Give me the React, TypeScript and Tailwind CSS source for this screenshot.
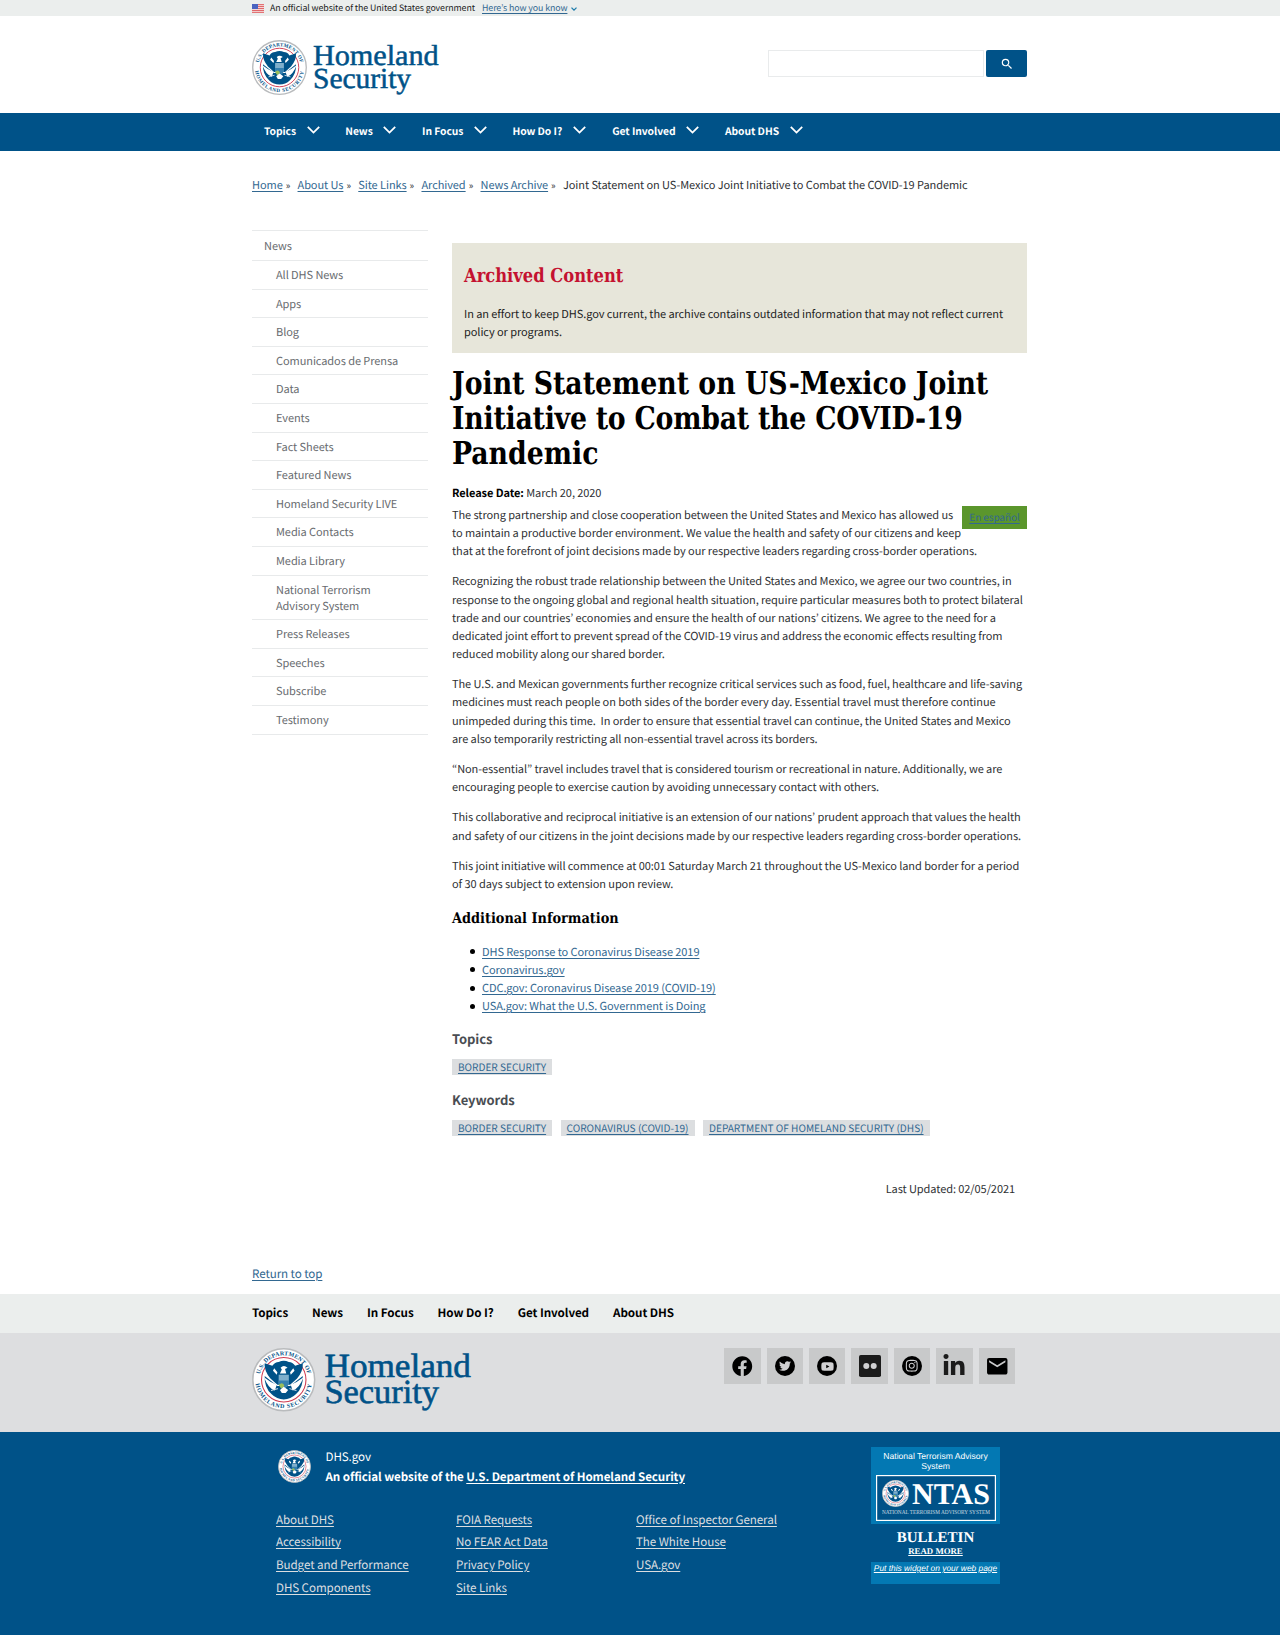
import React from "react";
import { FaFacebook, FaTwitter, FaYoutube, FaLinkedinIn, FaInstagram } from "react-icons/fa";
import { MdEmail, MdSearch } from "react-icons/md";

const serif = "font-['DejaVu_Serif_Condensed','DejaVu_Serif',serif] font-bold [font-stretch:condensed] origin-left";
const link = "text-[#326891] underline decoration-[1px] underline-offset-[1.5px]";

const navItems = [
  { label: "Topics", width: "w-[55.5px]" },
  { label: "News", width: "w-[51px]" },
  { label: "In Focus", width: "w-[64.5px]" },
  { label: "How Do I?", width: "w-[74px]" },
  { label: "Get Involved", width: "w-[87px]" },
  { label: "About DHS", width: "w-[78px]" },
];

const sideItems = [
  "All DHS News", "Apps", "Blog", "Comunicados de Prensa", "Data", "Events", "Fact Sheets",
  "Featured News", "Homeland Security LIVE", "Media Contacts", "Media Library",
  "National Terrorism Advisory System", "Press Releases", "Speeches", "Subscribe", "Testimony",
];

const paragraphs = [
  [
    "The strong partnership and close cooperation between the United States and Mexico has allowed us",
    "to maintain a productive border environment. We value the health and safety of our citizens and keep",
    "that at the forefront of joint decisions made by our respective leaders regarding cross-border operations.",
  ],
  [
    "Recognizing the robust trade relationship between the United States and Mexico, we agree our two countries, in",
    "response to the ongoing global and regional health situation, require particular measures both to protect bilateral",
    "trade and our countries’ economies and ensure the health of our nations’ citizens. We agree to the need for a",
    "dedicated joint effort to prevent spread of the COVID-19 virus and address the economic effects resulting from",
    "reduced mobility along our shared border.",
  ],
  [
    "The U.S. and Mexican governments further recognize critical services such as food, fuel, healthcare and life-saving",
    "medicines must reach people on both sides of the border every day. Essential travel must therefore continue",
    "unimpeded during this time.\u00a0 In order to ensure that essential travel can continue, the United States and Mexico",
    "are also temporarily restricting all non-essential travel across its borders.",
  ],
  [
    "“Non-essential” travel includes travel that is considered tourism or recreational in nature. Additionally, we are",
    "encouraging people to exercise caution by avoiding unnecessary contact with others.",
  ],
  [
    "This collaborative and reciprocal initiative is an extension of our nations’ prudent approach that values the health",
    "and safety of our citizens in the joint decisions made by our respective leaders regarding cross-border operations.",
  ],
  [
    "This joint initiative will commence at 00:01 Saturday March 21 throughout the US-Mexico land border for a period",
    "of 30 days subject to extension upon review.",
  ],
];

const resources = [
  "DHS Response to Coronavirus Disease 2019",
  "Coronavirus.gov",
  "CDC.gov: Coronavirus Disease 2019 (COVID-19)",
  "USA.gov: What the U.S. Government is Doing",
];

const footerColumns = [
  ["About DHS", "Accessibility", "Budget and Performance", "DHS Components"],
  ["FOIA Requests", "No FEAR Act Data", "Privacy Policy", "Site Links"],
  ["Office of Inspector General", "The White House", "USA.gov"],
];

function Seal({ id, className }: { id: string; className: string }) {
  return (
    <svg viewBox="0 0 100 100" className={className} role="img" aria-label="Seal">
      <defs>
        <path id={id + "-top"} d="M11.5 50 A38.5 38.5 0 1 1 88.5 50" />
        <path id={id + "-bottom"} d="M5.2 50 A44.8 44.8 0 0 0 94.8 50" />
      </defs>
      <circle cx="50" cy="50" r="48.7" fill="#fff" stroke="#b9bbbd" strokeWidth="2.4" />
      <circle cx="50" cy="50" r="35" fill="#fff" stroke="#cf3a50" strokeWidth="1.7" />
      <g fill="#005288" fontFamily="Liberation Serif" fontWeight="700" fontSize="9.4" textAnchor="middle">
        <text letterSpacing="0.2">
          <textPath href={"#" + id + "-top"} startOffset="50%">U.S. DEPARTMENT OF</textPath>
        </text>
        <text letterSpacing="1.2">
          <textPath href={"#" + id + "-bottom"} startOffset="50%">HOMELAND SECURITY</textPath>
        </text>
      </g>
      <path d="M20 44 Q19 62 31 73 Q39 81 50 81 Q61 81 69 73 Q81 62 80 44 L60 60 H40Z" fill="#005288" />
      <path d="M20 24 L32 28 Q36 22 42 22 Q50 18 58 22 Q64 22 68 28 L80 24 Q81 36 71 48 L60 58 H40 L29 48 Q19 36 20 24Z" fill="#005288" />
      <path d="M19 46 Q29 54 39 58 L36 67 Q25 63 19 46Z" fill="#fff" />
      <path d="M81 46 Q71 54 61 58 L64 67 Q75 63 81 46Z" fill="#fff" />
      <path d="M35 32 L40 38 L39 42 L33 36Z M65 32 L60 38 L61 42 L67 36Z" fill="#fff" />
      <path d="M45 31 Q50 26 56 31 L52 33 L54 40 L44 40 L47 34Z" fill="#fff" />
      <path d="M42 42 H58 V56 Q57 61 50 64 Q43 61 42 56Z" fill="#7fafcc" />
      <path d="M42 51 H58 V56 Q57 61 50 64 Q43 61 42 56Z" fill="#3580b0" />
      <path d="M42 58 Q49 52 51 60 L46 64Z" fill="#9bbf5a" />
      <path d="M44 66 L50 61 L57 66 L53 71 L47 71Z" fill="#fff" />
      <path d="M30 67 L41 64 M70 67 L59 64" stroke="#dfe9f0" strokeWidth="1.5" />
    </svg>
  );
}

function Wordmark({ className }: { className: string }) {
  return (
    <svg viewBox="0 0 126 54" className={className} overflow="visible">
      <g fill="#005288" stroke="#005288" strokeWidth="0.5" fontFamily="Liberation Serif" fontSize="29">
        <text x="0" y="25" textLength="125.5" lengthAdjust="spacingAndGlyphs">Homeland</text>
        <text x="0" y="47.5" textLength="98" lengthAdjust="spacingAndGlyphs">Security</text>
      </g>
    </svg>
  );
}

function Chevron({ className }: { className: string }) {
  return (
    <svg viewBox="0 0 13 8" className={className} fill="none" stroke="currentColor" strokeWidth="1.8">
      <path d="M0.8 0.9 L6.5 6.6 L12.2 0.9" />
    </svg>
  );
}

function SmallChevron() {
  return (
    <svg viewBox="0 0 6 4" className="ml-1 mt-px h-1 w-1.5" fill="none" stroke="#1f7cab" strokeWidth="1.3">
      <path d="M0.5 0.6 L3 3.1 L5.5 0.6" />
    </svg>
  );
}

function Flag() {
  return (
    <svg viewBox="0 0 12 9" className="h-[9px] w-3">
      <rect width="12" height="9" fill="#f3d6d6" />
      <path d="M0 .6H12M0 2.5H12M0 4.5H12M0 6.5H12M0 8.4H12" stroke="#e0686b" strokeWidth="1" />
      <rect width="6" height="5" fill="#4a63c0" />
    </svg>
  );
}

function Disc({ children }: { children: React.ReactNode }) {
  return <span className="flex size-[20.5px] items-center justify-center rounded-full bg-black text-[#d0d0d2]">{children}</span>;
}

function FlickrIcon() {
  return (
    <svg viewBox="0 0 22 22" className="size-[22px]">
      <rect width="22" height="22" rx="1.8" fill="#1b1b1b" />
      <circle cx="7.3" cy="11" r="3" fill="#d0d0d2" />
      <circle cx="14.7" cy="11" r="3" fill="#d0d0d2" />
    </svg>
  );
}

function Tag({ children }: { children: string }) {
  return (
    <a className={"flex h-[16px] items-center whitespace-nowrap bg-[#dcdee0] px-[6px] text-[10.1px] leading-4 tracking-[-0.01px] " + link}>{children}</a>
  );
}

export default function App() {
  const social = [
    <FaFacebook className="size-[20.5px]" />,
    <Disc><FaTwitter className="size-[12px]" /></Disc>,
    <Disc><FaYoutube className="size-[13px]" /></Disc>,
    <FlickrIcon />,
    <Disc><FaInstagram className="size-[13.5px]" /></Disc>,
    <FaLinkedinIn className="size-[24px] text-[#1b1b1b]" />,
    <MdEmail className="size-[24.5px]" />,
  ];

  return (
    <div className="h-[1635px] overflow-hidden bg-white font-['Noto_Sans_CJK_JP',sans-serif] text-[11px] leading-[18.15px] tracking-[-0.075px] text-[#2e3033] [text-rendering:geometricPrecision]">
      <div className="h-4 bg-[#ebeeed]">
        <div className="mx-auto flex h-[17px] w-[776px] items-center text-[8.8px] text-[#222]">
          <Flag />
          <span className="ml-[6px] w-[212px] whitespace-nowrap">An official website of the United States government</span>
          <a className={"whitespace-nowrap text-[#1f6ca5] " + link}>Here’s how you know</a>
          <SmallChevron />
        </div>
      </div>

      <header className="mx-auto flex h-[97px] w-[776px] pr-px pt-6">
        <Seal id="head" className="-ml-[0.5px] size-[55px]" />
        <Wordmark className="ml-[6.5px] h-[54px] w-[126px]" />
        <div className="ml-auto mt-[10px] flex h-[27px] gap-[2px]">
          <div className="w-[216px] border border-[#e9ebec]" />
          <button className="flex w-[41px] items-center justify-center rounded-[2px] bg-[#005288] text-white">
            <MdSearch className="size-[14px]" />
          </button>
        </div>
      </header>

      <nav className="h-[38px] bg-[#005288]">
        <div className="mx-auto flex h-[36px] w-[776px] items-center gap-[25.8px] pl-3 text-[10.3px] font-bold tracking-[-0.05px] text-white">
          {navItems.map((item) => (
            <a key={item.label} className={"flex items-center justify-between whitespace-nowrap " + item.width}>
              {item.label}
              <Chevron className="-mt-[1.5px] w-[13px]" />
            </a>
          ))}
        </div>
      </nav>

      <div className="mx-auto mt-[25px] flex h-[18px] w-[776px] items-center whitespace-nowrap">
        {["Home", "About Us", "Site Links", "Archived", "News Archive"].map((crumb) => (
          <React.Fragment key={crumb}>
            <a className={link}>{crumb}</a>
            <span className="ml-[3px] mr-[7.4px] text-[9.5px]">»</span>
          </React.Fragment>
        ))}
        <span>Joint Statement on US-Mexico Joint Initiative to Combat the COVID-19 Pandemic</span>
      </div>

      <div className="mx-auto flex h-[1068px] w-[776px]">
        <aside className="mt-[36px] w-[176px] shrink-0 text-[11px] leading-4 text-[#686b6f]">
          <a className="block h-[30px] border-t border-[#e8eaeb] pl-3 pt-[6.5px]">News</a>
          {sideItems.map((item) => (
            <a key={item} className="block border-t border-[#e8eaeb] pb-[5.6px] pl-6 pr-7 pt-[6px]">
              <span className={item.startsWith("National") ? "block max-w-[115px]" : "block whitespace-nowrap"}>{item}</span>
            </a>
          ))}
          <div className="border-t border-[#e8eaeb]" />
        </aside>

        <main className="ml-6 mt-[49px] w-[575px]">
          <section className="h-[110px] bg-[#e7e6da] px-3 pt-[20px] text-[#222]">
            <h2 className={"scale-x-[0.941] whitespace-nowrap text-[19.3px] leading-[26px] tracking-normal text-[#c41230] " + serif}>Archived Content</h2>
            <p className="mt-[15.8px] whitespace-nowrap">
              In an effort to keep DHS.gov current, the archive contains outdated information that may not reflect current
              <br />
              policy or programs.
            </p>
          </section>

          <h1 className={"mt-[12.5px] scale-x-[0.943] whitespace-nowrap text-[31.5px] leading-[35.4px] tracking-normal text-black " + serif}>
            Joint Statement on US-Mexico Joint
            <br />
            <span className="tracking-[-0.24px]">Initiative to Combat the COVID-19</span>
            <br />
            Pandemic
          </h1>

          <p className="mt-[12px]">
            <b className="text-black">Release Date:</b> March 20, 2020
          </p>
          <div className="relative mt-[4px]">
            <a className={"absolute right-0 top-0 flex h-[23px] w-[65px] items-center justify-center bg-[#5b962c] text-[10px] " + link}>En español</a>
            {paragraphs.map((lines) => (
              <p key={lines[0]} className="mb-[12.1px] whitespace-nowrap">
                {lines.map((line) => (
                  <span key={line} className="block">{line}</span>
                ))}
              </p>
            ))}
          </div>

          <h3 className={"mt-[15.5px] scale-x-[0.982] text-[14.6px] leading-5 tracking-normal text-black " + serif}>Additional Information</h3>
          <ul className="mt-[14px]">
            {resources.map((item) => (
              <li key={item} className="flex items-center pl-[18px]">
                <span className="mr-[7px] size-[5px] rounded-full bg-black" />
                <a className={link}>{item}</a>
              </li>
            ))}
          </ul>

          <h4 className="mt-[13.5px] text-[13px] font-bold leading-5 text-[#494d52]">Topics</h4>
          <div className="mt-[10px] flex"><Tag>BORDER SECURITY</Tag></div>
          <h4 className="mt-[15px] text-[13px] font-bold leading-5 text-[#494d52]">Keywords</h4>
          <div className="mt-[10px] flex gap-[8.5px]">
            <Tag>BORDER SECURITY</Tag>
            <Tag>CORONAVIRUS (COVID-19)</Tag>
            <Tag>DEPARTMENT OF HOMELAND SECURITY (DHS)</Tag>
          </div>
          <p className="mt-[44px] pr-3 text-right">Last Updated: 02/05/2021</p>
        </main>
      </div>

      <div className="mx-auto h-[32px] w-[776px] pt-[2.5px]">
        <a className={"text-[11.6px] " + link}>Return to top</a>
      </div>

      <footer>
        <div className="h-[39px] bg-[#ebeeed]">
          <div className="mx-auto flex h-[38.5px] w-[776px] items-center gap-6 whitespace-nowrap text-[11.65px] font-bold text-black">
            {navItems.map((item) => <a key={item.label}>{item.label}</a>)}
          </div>
        </div>
        <div className="h-[99px] bg-[#dddee0]">
          <div className="mx-auto flex w-[776px] pr-px pt-[15px]">
            <Seal id="foot" className="size-[63.5px]" />
            <Wordmark className="ml-[8.5px] h-[63px] w-[148px]" />
            <div className="ml-auto mr-3 flex gap-[6px]">
              {social.map((icon, i) => (
                <a key={i} className="flex size-[36.4px] items-center justify-center bg-[#c8c9ca] text-black">{icon}</a>
              ))}
            </div>
          </div>
        </div>
        <div className="h-[206px] bg-[#005288] text-white">
          <div className="mx-auto flex w-[776px] justify-between pl-6 pr-[28px] pt-[15px]">
            <div>
              <div className="flex">
                <Seal id="ident" className="ml-[2px] mt-[2.5px] size-[33px]" />
                <div className="ml-[14.5px] whitespace-nowrap text-[11.6px] leading-5">
                  <p>DHS.gov</p>
                  <p className="font-bold">
                    An official website of the <a className="underline underline-offset-[1.5px]">U.S. Department of Homeland Security</a>
                  </p>
                </div>
              </div>
              <div className="mt-[21.5px] flex text-[11.6px] leading-[22.8px] text-[#dcdee0]">
                {footerColumns.map((column) => (
                  <ul key={column[0]} className="w-[180px] whitespace-nowrap">
                    {column.map((item) => (
                      <li key={item}><a className="underline underline-offset-[1.5px]">{item}</a></li>
                    ))}
                  </ul>
                ))}
              </div>
            </div>

            <div className="w-[129px] text-center font-['Liberation_Sans',sans-serif] tracking-normal">
              <div className="h-[77px] bg-[#0378b3] px-1 pt-[4px]">
                <p className="whitespace-nowrap text-[8.6px] leading-[10px]">National Terrorism Advisory<br />System</p>
                <svg viewBox="0 0 120 46" className="mx-auto mt-[4px] h-[46px] w-[120px]">
                  <rect x="0.6" y="0.6" width="118.8" height="44.8" fill="#005288" stroke="#fff" strokeWidth="1.2" />
                  <g fill="#fff" fontFamily="Liberation Serif">
                    <text x="36" y="28.5" fontSize="30" fontWeight="700" textLength="78" lengthAdjust="spacingAndGlyphs">NTAS</text>
                    <text x="6" y="39" fontSize="6" opacity="0.75" textLength="108" lengthAdjust="spacingAndGlyphs">NATIONAL TERRORISM ADVISORY SYSTEM</text>
                  </g>
                  <svg x="6" y="5" width="27" height="27"><Seal id="ntas" className="size-[27px]" /></svg>
                </svg>
              </div>
              <p className="mt-[7px] font-['Liberation_Serif',serif] text-[15px] font-bold leading-[15px]">BULLETIN</p>
              <p className="font-['Liberation_Serif',serif] text-[8.8px] font-bold leading-[11px] underline">READ MORE</p>
              <div className="mt-[5px] h-[22px] whitespace-nowrap bg-[#0378b3] pt-px text-[8.4px] italic leading-[11px] underline">
                Put this widget on your web page
              </div>
            </div>
          </div>
        </div>
      </footer>
    </div>
  );
}
